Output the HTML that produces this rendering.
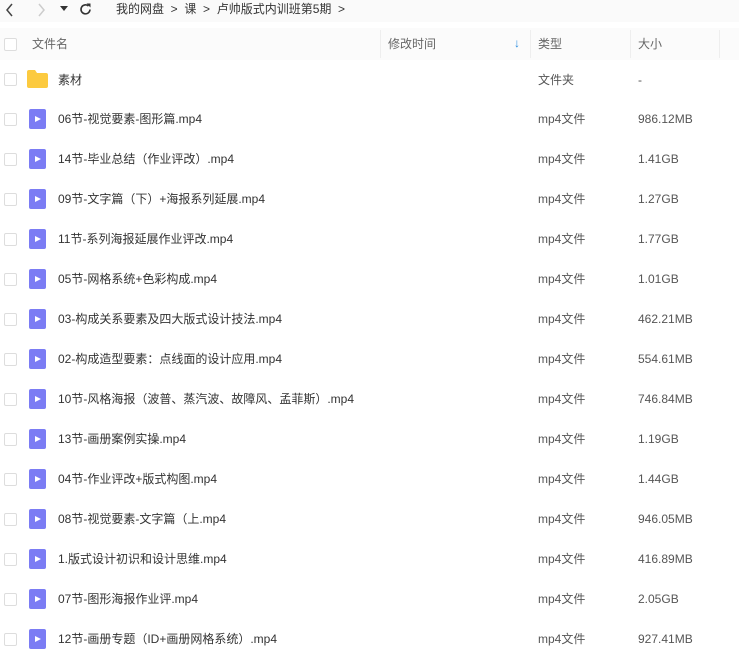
<!DOCTYPE html>
<html><head><meta charset="utf-8"><style>
body{margin:0;width:739px;height:662px;background:#fff;font-family:"Liberation Sans","Noto Sans CJK SC",sans-serif;font-size:12px;color:#333;overflow:hidden;position:relative}
.top{position:absolute;top:0;left:0;width:739px;height:22px;background:#fafafa}
.t{position:absolute;white-space:nowrap;line-height:16px;height:16px}
.hdr{position:absolute;top:28px;left:0;width:739px;height:32px;background:#fbfbfb}
.sep{position:absolute;top:30px;width:1px;height:28px;background:#eee}
.cb{position:absolute;left:4px;width:11px;height:11px;border:1px solid #ddd;border-radius:2px;background:#fff}
.fi{position:absolute;left:29px;width:17px;height:20px;background:#7b7cf4;border-radius:2px}
.fi:after{content:"";position:absolute;left:6px;top:7px;border-left:6px solid #fff;border-top:3.5px solid transparent;border-bottom:3.5px solid transparent}
.name{left:58px;color:#333}
.type{left:538px;color:#555}
.size{left:638px;color:#555}
</style></head><body>
<div class="top"></div>
<svg style="position:absolute;left:5px;top:3px" width="10" height="14"><path d="M7 1L2 7L7 13" stroke="#444" stroke-width="1.5" fill="none"/></svg>
<svg style="position:absolute;left:36px;top:3px" width="10" height="14"><path d="M3 1L8 7L3 13" stroke="#ccc" stroke-width="1.5" fill="none"/></svg>
<svg style="position:absolute;left:60px;top:6px" width="8" height="6"><path d="M0 0H8L4 5Z" fill="#333"/></svg>
<svg style="position:absolute;left:78px;top:2px" width="15" height="15"><path d="M12 7.5A4.5 4.5 0 1 1 10.5 4" stroke="#333" stroke-width="1.6" fill="none"/><path d="M8.5 1.5H12.5V5.5Z" fill="#333"/></svg>
<div class="t" style="left:116px;top:1px;color:#333">我的网盘 &nbsp;&gt;&nbsp; 课 &nbsp;&gt;&nbsp; 卢帅版式内训班第5期 &nbsp;&gt;</div>
<div class="hdr"></div>
<div class="sep" style="left:380px"></div><div class="sep" style="left:530px"></div><div class="sep" style="left:630px"></div><div class="sep" style="left:719px"></div>
<div class="cb" style="top:38px"></div>
<div class="t" style="left:32px;top:36px;color:#666">文件名</div>
<div class="t" style="left:388px;top:36px;color:#666">修改时间</div>
<div class="t" style="left:514px;top:35px;color:#2a8de0">&#8595;</div>
<div class="t" style="left:538px;top:36px;color:#666">类型</div>
<div class="t" style="left:638px;top:36px;color:#666">大小</div>

<div class="cb" style="top:73px"></div>
<svg style="position:absolute;left:27px;top:70px" width="21" height="18"><path d="M0 2Q0 0 2 0H8L10 3H19Q21 3 21 5V16Q21 18 19 18H2Q0 18 0 16Z" fill="#fcca3f"/></svg>
<div class="t name" style="top:72px">素材</div>
<div class="t type" style="top:72px">文件夹</div>
<div class="t size" style="top:72px">-</div>

<div id="rows"></div>
<script>
var d=[["06节-视觉要素-图形篇.mp4","986.12MB"],["14节-毕业总结（作业评改）.mp4","1.41GB"],["09节-文字篇（下）+海报系列延展.mp4","1.27GB"],["11节-系列海报延展作业评改.mp4","1.77GB"],["05节-网格系统+色彩构成.mp4","1.01GB"],["03-构成关系要素及四大版式设计技法.mp4","462.21MB"],["02-构成造型要素：点线面的设计应用.mp4","554.61MB"],["10节-风格海报（波普、蒸汽波、故障风、孟菲斯）.mp4","746.84MB"],["13节-画册案例实操.mp4","1.19GB"],["04节-作业评改+版式构图.mp4","1.44GB"],["08节-视觉要素-文字篇（上.mp4","946.05MB"],["1.版式设计初识和设计思维.mp4","416.89MB"],["07节-图形海报作业评.mp4","2.05GB"],["12节-画册专题（ID+画册网格系统）.mp4","927.41MB"]];
var h="";d.forEach(function(r,i){var c=119+40*i;
h+='<div class="cb" style="top:'+(c-6)+'px"></div><div class="fi" style="top:'+(c-10)+'px"></div><div class="t name" style="top:'+(c-8)+'px">'+r[0]+'</div><div class="t type" style="top:'+(c-8)+'px">mp4文件</div><div class="t size" style="top:'+(c-8)+'px">'+r[1]+'</div>';});
document.getElementById("rows").innerHTML=h;
</script>
</body></html>
